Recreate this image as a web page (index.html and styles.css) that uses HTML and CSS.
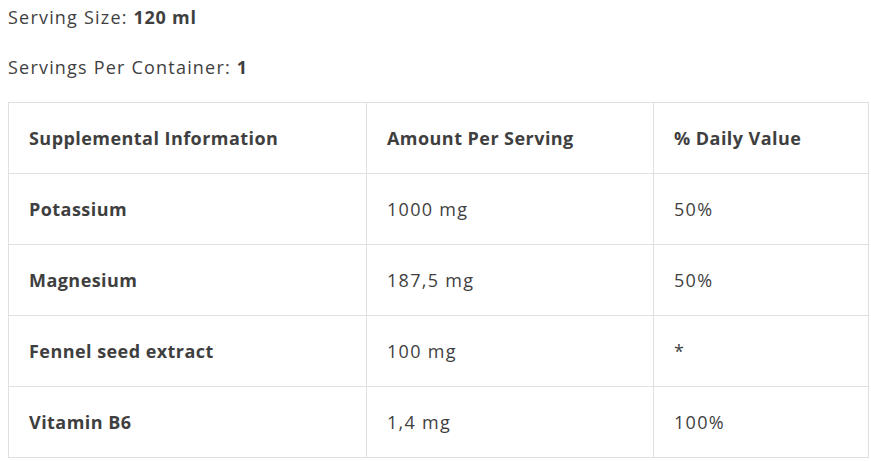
FILE: index.html
```html
<!DOCTYPE html>
<html>
<head>
<meta charset="utf-8">
<link rel="stylesheet" href="styles.css">
</head>
<body>
<div class="wrap">
<p class="meta first">Serving Size: <strong>120 ml</strong></p>
<p class="meta">Servings Per Container: <strong>1</strong></p>
<table class="facts">
  <colgroup>
    <col class="c1"><col class="c2"><col class="c3">
  </colgroup>
  <thead>
    <tr><th>Supplemental Information</th><th>Amount Per Serving</th><th>% Daily Value</th></tr>
  </thead>
  <tbody>
    <tr><th>Potassium</th><td>1000 mg</td><td>50%</td></tr>
    <tr><th>Magnesium</th><td>187,5 mg</td><td>50%</td></tr>
    <tr><th>Fennel seed extract</th><td>100 mg</td><td>*</td></tr>
    <tr><th>Vitamin B6</th><td>1,4 mg</td><td>100%</td></tr>
  </tbody>
</table>
</div>
</body>
</html>
```
FILE: styles.css
```css
body {
  margin: 0;
  font-family: "Open Sans", "Lato", sans-serif;
  font-size: 18px;
  color: #3f3f3f;
  background: #fff;
  letter-spacing: 1.2px;
}
.wrap {
  padding: 5px 0 0 8px;
  width: 860px;
}
.meta {
  margin: 0 0 26px 0;
  line-height: 24px;
}
.meta:last-of-type { margin-bottom: 23px; }
.meta strong { font-weight: 700; letter-spacing: 0.75px; }
.facts {
  border-collapse: collapse;
  width: 860px;
  table-layout: fixed;
}
.c1 { width: 358px; }
.c2 { width: 287px; }
.c3 { width: 215px; }
.facts th, .facts td {
  border: 1px solid #e0e0e0;
  height: 70px;
  padding: 0 0 0 20px;
  text-align: left;
  vertical-align: middle;
}
.facts th { font-weight: 700; letter-spacing: 0.45px; }
.facts td { font-weight: 400; letter-spacing: 1.3px; }
```
